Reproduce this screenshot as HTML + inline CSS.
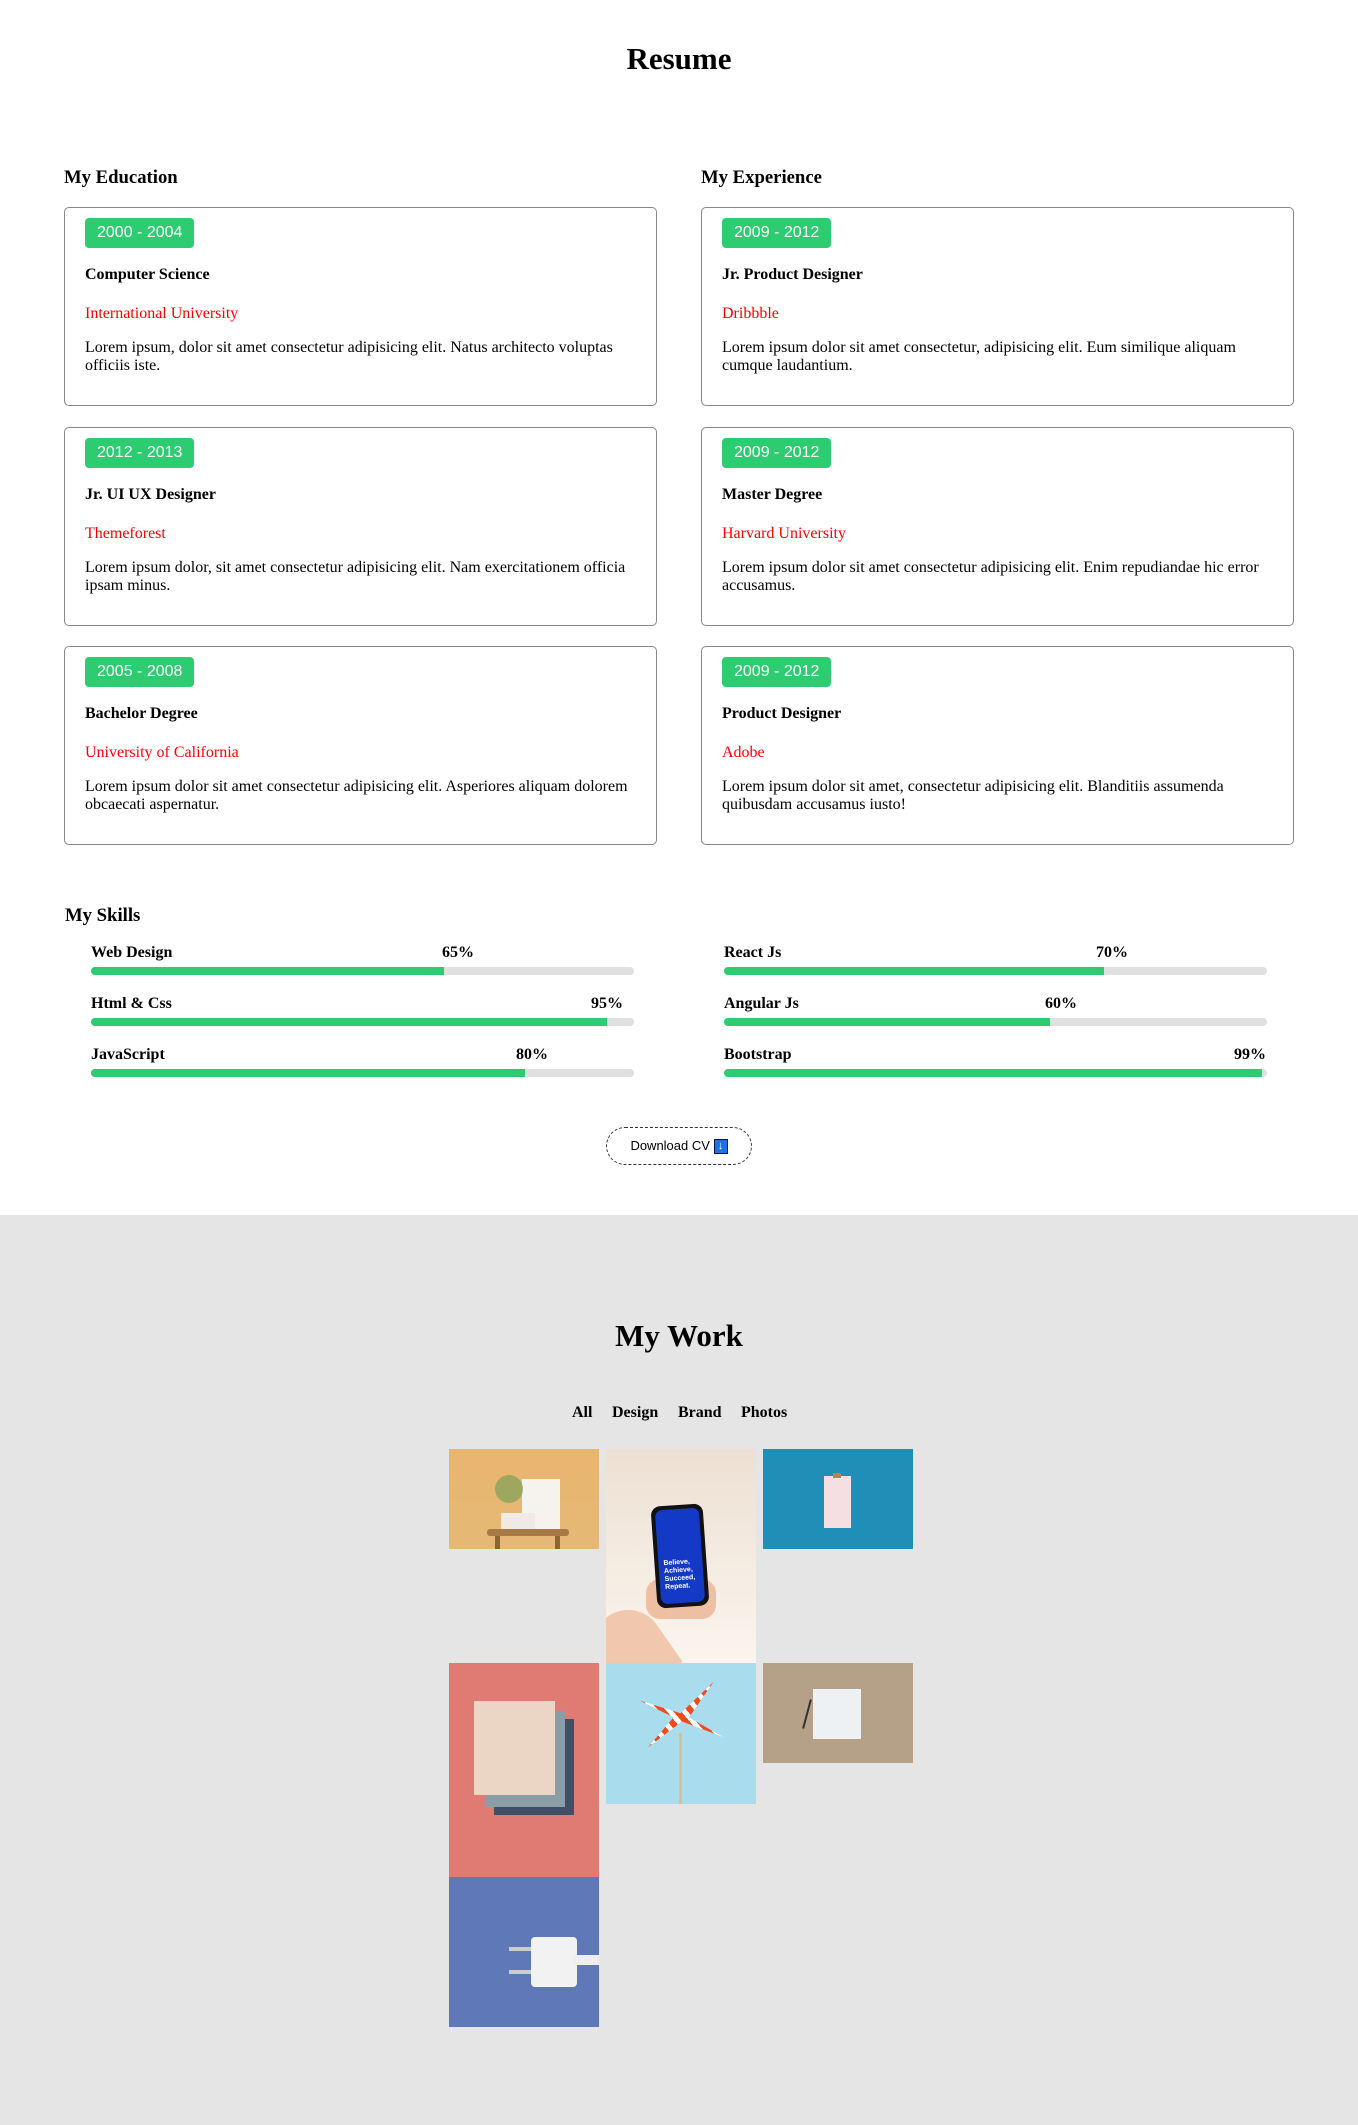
<!DOCTYPE html>
<html><head><meta charset="utf-8">
<style>
*{box-sizing:border-box;margin:0;padding:0}
body{width:1358px;height:2125px;background:#fff;font-family:"Liberation Serif",serif;color:#000;position:relative;overflow:hidden}
.abs{position:absolute}
h1{position:absolute;left:0;width:1358px;text-align:center;font-size:31px;font-weight:bold}
.sec{position:absolute;font-size:18.7px;font-weight:bold;line-height:22px}
.card{position:absolute;width:593px;height:199px;border:1px solid #888;border-radius:5px;padding:10px 20px 0 20px}
.badge{display:inline-block;height:30px;line-height:30px;padding:0 12px;background:#2ecc71;color:#fff;border-radius:4px;font-family:"Liberation Sans",sans-serif;font-size:16px}
.t{margin-top:18px;font-weight:bold;font-size:16px;line-height:18px}
.r{margin-top:21px;color:red;font-size:16px;line-height:18px}
.p{margin-top:16px;font-size:16px;line-height:18px;width:552px}
.sk{position:absolute;width:543px;height:40px}
.sk .l{position:absolute;left:0;top:0;font-weight:bold;font-size:16px;line-height:18px}
.sk .pc{position:absolute;top:0;font-weight:bold;font-size:16px;line-height:18px}
.sk .bar{position:absolute;left:0;top:23px;width:100%;height:8px;background:#e0e0e0;border-radius:4px;overflow:hidden}
.sk .f{height:8px;background:#2ecc71}
.grey{position:absolute;left:0;top:1215px;width:1358px;height:910px;background:#e5e5e5}
.img{position:absolute;overflow:hidden}
</style></head><body>
<h1 style="top:41px">Resume</h1>
<div class="sec" style="left:64px;top:167px">My Education</div>
<div class="sec" style="left:701px;top:167px">My Experience</div>

<div class="card" style="left:64px;top:207px"><span class="badge">2000 - 2004</span><div class="t">Computer Science</div><div class="r">International University</div><div class="p">Lorem ipsum, dolor sit amet consectetur adipisicing elit. Natus architecto voluptas officiis iste.</div></div>
<div class="card" style="left:64px;top:427px"><span class="badge">2012 - 2013</span><div class="t">Jr. UI UX Designer</div><div class="r">Themeforest</div><div class="p">Lorem ipsum dolor, sit amet consectetur adipisicing elit. Nam exercitationem officia ipsam minus.</div></div>
<div class="card" style="left:64px;top:646px"><span class="badge">2005 - 2008</span><div class="t">Bachelor Degree</div><div class="r">University of California</div><div class="p">Lorem ipsum dolor sit amet consectetur adipisicing elit. Asperiores aliquam dolorem obcaecati aspernatur.</div></div>

<div class="card" style="left:701px;top:207px"><span class="badge">2009 - 2012</span><div class="t">Jr. Product Designer</div><div class="r">Dribbble</div><div class="p">Lorem ipsum dolor sit amet consectetur, adipisicing elit. Eum similique aliquam cumque laudantium.</div></div>
<div class="card" style="left:701px;top:427px"><span class="badge">2009 - 2012</span><div class="t">Master Degree</div><div class="r">Harvard University</div><div class="p">Lorem ipsum dolor sit amet consectetur adipisicing elit. Enim repudiandae hic error accusamus.</div></div>
<div class="card" style="left:701px;top:646px"><span class="badge">2009 - 2012</span><div class="t">Product Designer</div><div class="r">Adobe</div><div class="p">Lorem ipsum dolor sit amet, consectetur adipisicing elit. Blanditiis assumenda quibusdam accusamus iusto!</div></div>

<div class="sec" style="left:65px;top:905px">My Skills</div>
<div class="sk" style="left:91px;top:944px"><span class="l">Web Design</span><span class="pc" style="left:351px">65%</span><div class="bar"><div class="f" style="width:65%"></div></div></div>
<div class="sk" style="left:91px;top:995px"><span class="l">Html &amp; Css</span><span class="pc" style="left:500px">95%</span><div class="bar"><div class="f" style="width:95%"></div></div></div>
<div class="sk" style="left:91px;top:1046px"><span class="l">JavaScript</span><span class="pc" style="left:425px">80%</span><div class="bar"><div class="f" style="width:80%"></div></div></div>
<div class="sk" style="left:724px;top:944px"><span class="l">React Js</span><span class="pc" style="left:372px">70%</span><div class="bar"><div class="f" style="width:70%"></div></div></div>
<div class="sk" style="left:724px;top:995px"><span class="l">Angular Js</span><span class="pc" style="left:321px">60%</span><div class="bar"><div class="f" style="width:60%"></div></div></div>
<div class="sk" style="left:724px;top:1046px"><span class="l">Bootstrap</span><span class="pc" style="left:510px">99%</span><div class="bar"><div class="f" style="width:99%"></div></div></div>

<div class="abs" style="left:606px;top:1127px;width:146px;height:38px;border:1px dashed #333;border-radius:19px;font-family:'Liberation Sans',sans-serif;font-size:13px;line-height:36px;text-align:center">Download CV <span style="display:inline-block;width:14px;height:15px;background:#1a73e8;border:1px solid #113;color:#fff;font-size:11px;line-height:13px;vertical-align:middle">↓</span></div>

<div class="grey"></div>
<h1 style="top:1318px">My Work</h1>
<div class="abs" style="left:572px;top:1403px;font-weight:bold;font-size:16px;line-height:20px">
<span style="position:absolute;left:0">All</span><span style="position:absolute;left:40px">Design</span><span style="position:absolute;left:106px">Brand</span><span style="position:absolute;left:169px">Photos</span></div>

<!-- img1 plant table -->
<div class="img" style="left:449px;top:1449px;width:150px;height:100px;background:linear-gradient(#e8b66f,#e6b876)">
<div class="abs" style="left:73px;top:30px;width:38px;height:52px;background:#f6f3ee"></div>
<div class="abs" style="left:52px;top:64px;width:34px;height:16px;background:#efeae4"></div>
<div class="abs" style="left:38px;top:80px;width:82px;height:7px;background:#a77a45;border-radius:3px"></div>
<div class="abs" style="left:46px;top:87px;width:5px;height:13px;background:#8c6535"></div><div class="abs" style="left:106px;top:87px;width:5px;height:13px;background:#8c6535"></div>
<div class="abs" style="left:46px;top:26px;width:28px;height:28px;background:#7fa057;border-radius:50%;opacity:.7"></div>
</div>
<!-- img2 phone -->
<div class="img" style="left:606px;top:1449px;width:150px;height:214px;background:linear-gradient(#ede0d3,#fbf5ee)">
<div class="abs" style="left:-10px;top:160px;width:70px;height:80px;background:#f1c7ad;border-radius:35px 35px 0 0;transform:rotate(-35deg)"></div>
<div class="abs" style="left:40px;top:130px;width:70px;height:40px;background:#efbfa3;border-radius:14px"></div>
<div class="abs" style="left:48px;top:56px;width:52px;height:102px;background:#111;border-radius:9px;transform:rotate(-4deg)"></div>
<div class="abs" style="left:52px;top:60px;width:44px;height:94px;background:#1439c6;border-radius:7px;transform:rotate(-4deg);color:#fff;font-family:'Liberation Sans',sans-serif;font-size:7px;font-weight:bold;line-height:8px;padding:50px 0 0 5px">Believe,<br>Achieve,<br>Succeed,<br>Repeat.</div>
</div>
<!-- img3 blue -->
<div class="img" style="left:763px;top:1449px;width:150px;height:100px;background:#1f8fb8">
<div class="abs" style="left:61px;top:27px;width:27px;height:52px;background:#f6dfe2"></div>
<div class="abs" style="left:70px;top:24px;width:8px;height:5px;background:#b98350"></div>
</div>
<!-- img4 red papers -->
<div class="img" style="left:449px;top:1663px;width:150px;height:214px;background:#e07b73">
<div class="abs" style="left:45px;top:56px;width:80px;height:96px;background:#3f4f66"></div>
<div class="abs" style="left:36px;top:48px;width:80px;height:96px;background:#8a9ea8"></div>
<div class="abs" style="left:25px;top:38px;width:81px;height:94px;background:#ebd6c6"></div>
</div>
<!-- img5 pinwheel -->
<div class="img" style="left:606px;top:1663px;width:150px;height:141px;background:#a9dcec">
<div class="abs" style="left:73px;top:70px;width:3px;height:75px;background:#d8c09a"></div>
<div class="abs" style="left:37px;top:25px;width:76px;height:56px;background:repeating-linear-gradient(60deg,#f04a1e 0 6px,#fff 6px 11px);transform:rotate(-10deg);clip-path:polygon(0 10%,50% 45%,100% 0,60% 55%,100% 100%,50% 60%,0 95%,40% 50%)"></div>
</div>
<!-- img6 kraft -->
<div class="img" style="left:763px;top:1663px;width:150px;height:100px;background:#b4a187">
<div class="abs" style="left:50px;top:26px;width:48px;height:50px;background:#eef1f3"></div>
<div class="abs" style="left:43px;top:36px;width:2px;height:30px;background:#333;transform:rotate(15deg)"></div>
</div>
<!-- img7 charger -->
<div class="img" style="left:449px;top:1877px;width:150px;height:150px;background:#5f79b8">
<div class="abs" style="left:82px;top:60px;width:46px;height:50px;background:#f2f2f2;border-radius:4px"></div>
<div class="abs" style="left:124px;top:78px;width:30px;height:10px;background:#eee;border-radius:4px"></div>
<div class="abs" style="left:60px;top:70px;width:22px;height:4px;background:#ccc"></div>
<div class="abs" style="left:60px;top:93px;width:22px;height:4px;background:#ccc"></div>
</div>
</body></html>
